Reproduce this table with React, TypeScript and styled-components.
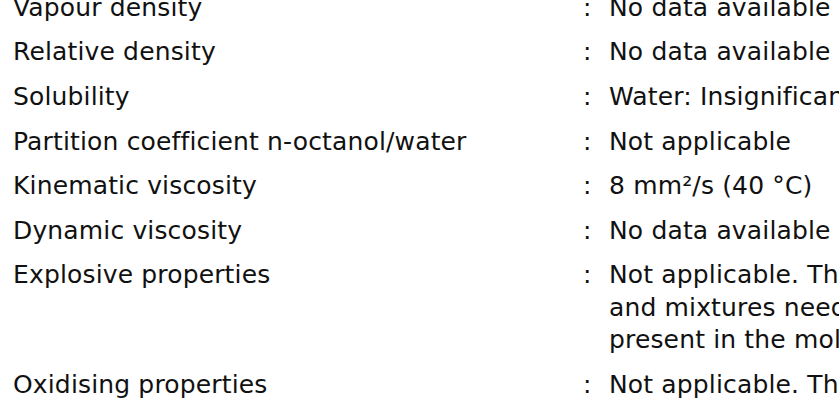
import React from "react";
import styled, { createGlobalStyle } from "styled-components";

const Global = createGlobalStyle`
  html, body {
    margin: 0;
    padding: 0;
    background: #ffffff;
    overflow: hidden;
  }
  body {
    width: 839px;
    height: 400px;
  }
`;

const Sheet = styled.div`
  width: 839px;
  height: 400px;
  overflow: hidden;
  background: #ffffff;
`;

const List = styled.dl`
  margin: -8.2px 0 0 0;
  padding: 0 0 0 13px;
  display: flex;
  flex-direction: column;
  gap: 12.2px;
  font-family: "DejaVu Sans", "Liberation Sans", sans-serif;
  font-size: 25px;
  letter-spacing: 0.15px;
  line-height: 32.4px;
  color: #111111;
`;

const Row = styled.div`
  display: grid;
  grid-template-columns: 570px 26px 1fr;
  align-items: start;
`;

const Label = styled.dt`
  margin: 0;
  white-space: nowrap;
`;

const Colon = styled.span`
  white-space: nowrap;
`;

const Value = styled.dd`
  margin: 0;
  display: flex;
  flex-direction: column;
  white-space: nowrap;
`;

const Line = styled.span`
  display: block;
`;

type Item = { label: string; value: string[] };

const items: Item[] = [
  { label: "Vapour density", value: ["No data available"] },
  { label: "Relative density", value: ["No data available"] },
  { label: "Solubility", value: ["Water: Insignificant"] },
  { label: "Partition coefficient n-octanol/water", value: ["Not applicable"] },
  { label: "Kinematic viscosity", value: ["8 mm²/s (40 °C)"] },
  { label: "Dynamic viscosity", value: ["No data available"] },
  {
    label: "Explosive properties",
    value: [
      "Not applicable. The classification procedure for substances",
      "and mixtures need not be applied because there are no chemical groups",
      "present in the molecule associated with explosive properties.",
    ],
  },
  {
    label: "Oxidising properties",
    value: [
      "Not applicable. The classification procedure for substances",
      "and mixtures need not be applied because there are no chemical groups",
      "present in the molecule associated with oxidising properties.",
    ],
  },
];

export default function App() {
  return (
    <>
      <Global />
      <Sheet>
        <List>
          {items.map((it) => (
            <Row key={it.label}>
              <Label>{it.label}</Label>
              <Colon>:</Colon>
              <Value>
                {it.value.map((l, i) => (
                  <Line key={i}>{l}</Line>
                ))}
              </Value>
            </Row>
          ))}
        </List>
      </Sheet>
    </>
  );
}
